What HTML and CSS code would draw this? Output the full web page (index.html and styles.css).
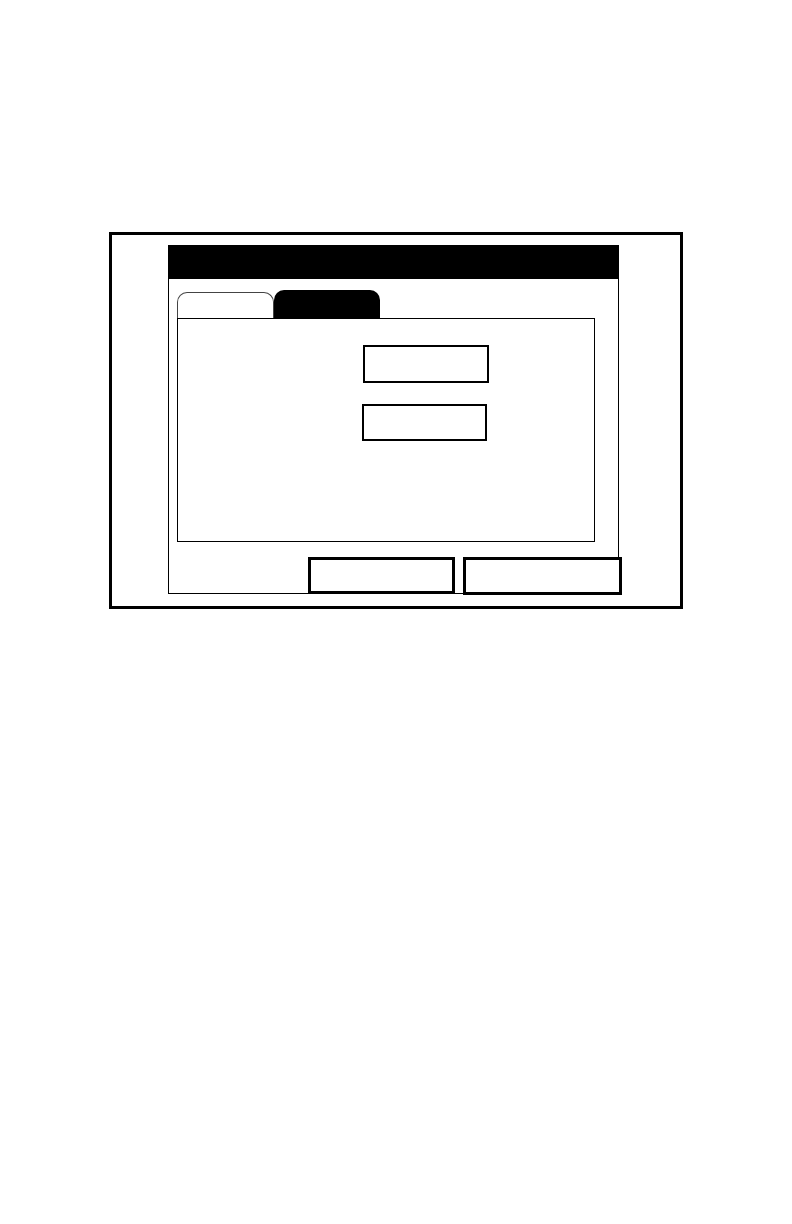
FILE: index.html
```html
<!DOCTYPE html>
<html lang="en">
<head>
<meta charset="utf-8">
<title>Screen</title>
<link rel="stylesheet" href="styles.css">
</head>
<body>
<div class="frame">
  <div class="panel">
    <div class="titlebar"></div>
    <div class="tabs">
      <div class="tab tab-inactive"></div>
      <div class="tab tab-active"></div>
    </div>
    <div class="content">
      <div class="field field-a"></div>
      <div class="field field-b"></div>
    </div>
    <div class="footer">
      <div class="btn btn-a"></div>
      <div class="btn btn-b"></div>
    </div>
  </div>
</div>
</body>
</html>
```
FILE: styles.css
```css
html, body {
  margin: 0;
  padding: 0;
  background: #fff;
  font-family: "Liberation Sans", Arial, sans-serif;
}

.frame {
  margin: 232px 0 0 109px;
  width: 574px;
  height: 377px;
  box-sizing: border-box;
  border: 3px solid #000;
  padding: 10px 0 0 56px;
}

.panel {
  width: 451px;
  height: 349px;
  box-sizing: border-box;
  border: 1px solid #000;
  border-top: 0;
  display: flex;
  flex-direction: column;
}

.panel > * {
  flex-shrink: 0;
}

.titlebar {
  height: 34px;
  margin: 0 -1px;
  background: #000;
}

.tabs {
  display: flex;
  align-items: flex-end;
  height: 28px;
  margin: 11px 0 0 8px;
}

.tab {
  box-sizing: border-box;
  border-radius: 10px 10px 0 0;
}

.tab-inactive {
  width: 97px;
  height: 26px;
  border: 1px solid #444;
  border-bottom: 0;
  background: #fff;
}

.tab-active {
  width: 106px;
  height: 28px;
  background: #000;
}

.content {
  margin-left: 8px;
  width: 418px;
  height: 224px;
  box-sizing: border-box;
  border: 1px solid #000;
  padding: 26px 0 0 185px;
  display: flex;
  flex-direction: column;
  align-items: flex-start;
}

.field {
  box-sizing: border-box;
  border: 2px solid #000;
  background: #fff;
}

.field-a {
  width: 126px;
  height: 38px;
}

.field-b {
  width: 125px;
  height: 37px;
  margin: 21px 0 0 -1px;
}

.footer {
  display: flex;
  justify-content: flex-end;
  align-items: flex-start;
  gap: 8px;
  margin: 15px -4px 0 0;
}

.btn {
  box-sizing: border-box;
  border: 3px solid #000;
  background: #fff;
}

.btn-a {
  width: 147px;
  height: 37px;
}

.btn-b {
  width: 159px;
  height: 38px;
}
```
